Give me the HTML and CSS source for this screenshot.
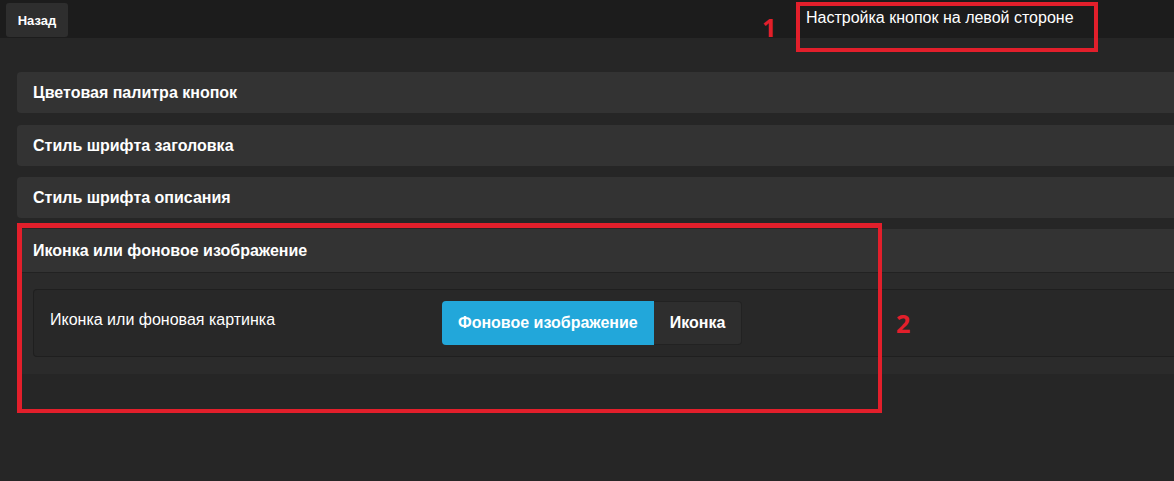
FILE: index.html
```html
<!DOCTYPE html>
<html lang="ru">
<head>
  <meta charset="UTF-8">
  <title>Настройка кнопок на левой стороне</title>
  <link rel="stylesheet" href="styles.css">
</head>
<body>
  <div class="topbar">
    <button class="back-btn">Назад</button>
    <div class="page-title">Настройка кнопок на левой стороне</div>
  </div>

  <div class="content">
    <div class="panel">
      <div class="panel-head">Цветовая палитра кнопок</div>
    </div>
    <div class="panel">
      <div class="panel-head">Стиль шрифта заголовка</div>
    </div>
    <div class="panel">
      <div class="panel-head">Стиль шрифта описания</div>
    </div>
    <div class="panel open">
      <div class="panel-head">Иконка или фоновое изображение</div>
      <div class="panel-body">
        <div class="option-card">
          <div class="option-label">Иконка или фоновая картинка</div>
          <div class="toggle">
            <button class="toggle-btn active">Фоновое изображение</button>
            <button class="toggle-btn">Иконка</button>
          </div>
        </div>
      </div>
    </div>
  </div>

  <!-- annotation marks drawn over the screenshot -->
  <div class="mark box-1"></div>
  <div class="mark-num num-1">1</div>
  <div class="mark box-2"></div>
  <div class="mark-num num-2">2</div>
</body>
</html>
```

FILE: styles.css
```css
body {
  margin: 0;
  background-color: #262626;
  font-family: 'Liberation Sans', Arial, sans-serif;
  color: #fff;
  overflow: hidden;
  height: 481px;
  position: relative;
}
.topbar {
  display: flex;
  align-items: flex-start;
  height: 38px;
  background-color: #1c1c1c;
}
.back-btn {
  margin: 3px 0 0 6px;
  width: 62px;
  height: 34px;
  background-color: #2e2e2e;
  color: #fff;
  border: none;
  border-radius: 3px;
  font-family: inherit;
  font-size: 13px;
  font-weight: bold;
  padding: 0;
}
.page-title {
  margin: 9px 0 0 738px;
  font-size: 16px;
  line-height: 18px;
  white-space: nowrap;
}
.content {
  padding: 34px 0 0 17px;
  width: 1180px;
}
.panel {
  background-color: #333;
  border-radius: 4px 0 0 4px;
  margin-bottom: 11px;
}
.panel:first-child {
  margin-bottom: 12px;
}
.panel-head {
  height: 41px;
  line-height: 42px;
  padding-left: 16px;
  font-size: 16px;
  font-weight: bold;
}
.panel.open .panel-head {
  height: 43px;
  line-height: 43px;
  border-bottom: 1px solid #222;
}
.panel-body {
  background-color: #2b2b2b;
  padding: 16px 0 17px 16px;
}
.option-card {
  display: flex;
  align-items: flex-start;
  height: 66px;
  background-color: #282828;
  border: 1px solid #1f1f1f;
  border-right: none;
  border-radius: 4px 0 0 4px;
}
.option-label {
  width: 392px;
  padding: 21px 0 0 16px;
  font-size: 16px;
  line-height: 18px;
}
.toggle {
  display: flex;
  margin-top: 11px;
}
.toggle-btn {
  height: 44px;
  padding: 0 16px;
  background-color: #2e2e2e;
  border: 1px solid #222;
  border-left: none;
  border-radius: 0 4px 4px 0;
  color: #fff;
  font-family: inherit;
  font-size: 16px;
  font-weight: bold;
}
.toggle-btn.active {
  background-color: #22a7da;
  border: none;
  border-radius: 4px 0 0 4px;
}
.mark {
  position: absolute;
  border: 4px solid #e21f2b;
}
.box-1 {
  left: 796px;
  top: 2px;
  width: 294px;
  height: 42px;
}
.box-2 {
  left: 17px;
  top: 223px;
  width: 856px;
  height: 181px;
  border-width: 5px 4px 4px 5px;
}
.mark-num {
  position: absolute;
  color: #e21f2b;
  font-family: 'Open Sans', sans-serif;
  font-weight: bold;
  font-size: 25px;
  line-height: 30px;
}
.num-1 {
  left: 762px;
  top: 12px;
}
.num-2 {
  left: 896px;
  top: 308px;
}
```
